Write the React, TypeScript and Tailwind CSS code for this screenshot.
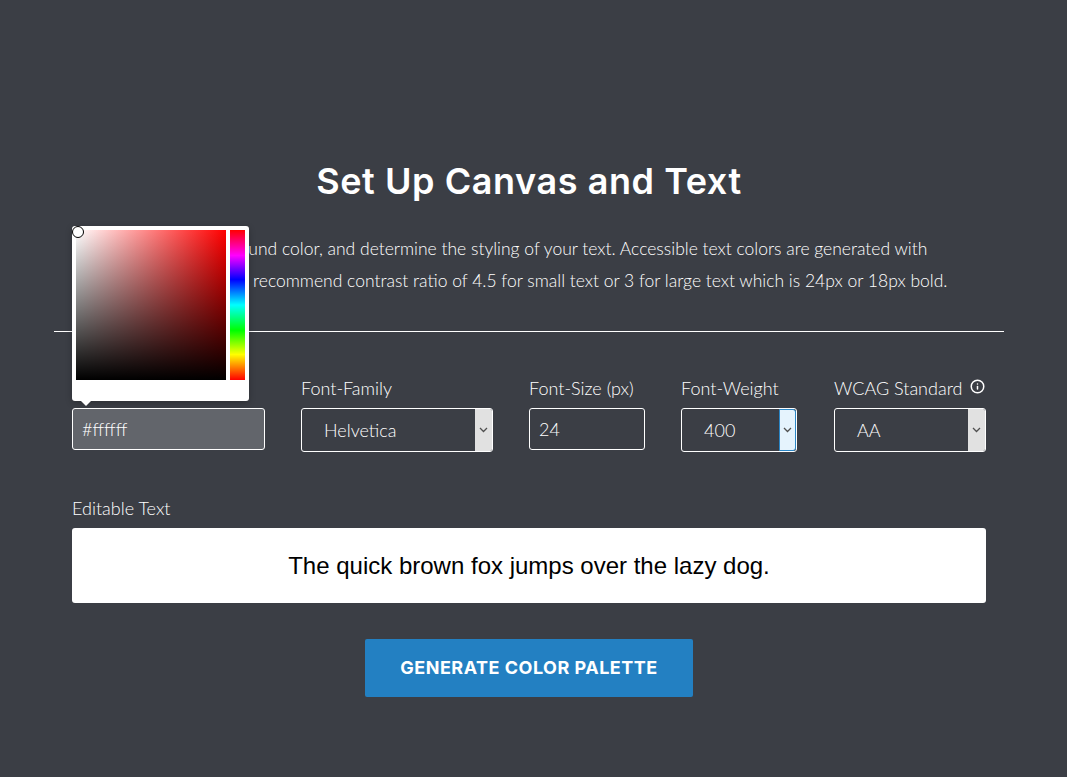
import { Info } from "lucide-react";

const Chevron = () => (
    <svg width="9" height="6" viewBox="0 0 9 6" fill="none">
        <path d="M1 1l3.5 3.5L8 1" stroke="#505050" strokeWidth="1.3" />
    </svg>
);

const SelectBox = ({ value, width, focused }: { value: string; width: string; focused?: boolean }) => (
    <div className={`${width} h-[44px] flex rounded-[3px] border border-white overflow-hidden`}>
        <div className="flex-1 flex items-center pl-[22px] text-[18px] text-white">{value}</div>
        {focused ? (
            <div className="w-[17px] flex items-center justify-center bg-[#e5f3fd] border border-[#2b86c5] rounded-r-[3px]">
                <Chevron />
            </div>
        ) : (
            <div className="w-[17px] flex items-center justify-center bg-[#e1e1e1]">
                <Chevron />
            </div>
        )}
    </div>
);

const ColorPicker = () => (
    <div className="absolute left-0 bottom-[49px] z-10 w-[177px] h-[175px] bg-white rounded-[3px] p-[4px] shadow-[0_2px_6px_rgba(0,0,0,0.25)]">
        <div className="flex gap-[4px]">
            <div className="w-[150px] h-[150px] bg-[linear-gradient(to_top,#000,transparent),linear-gradient(to_right,#fff,#f00)]" />
            <div className="w-[15px] h-[150px] bg-[linear-gradient(to_bottom,#f00,#f0f_17%,#00f_33%,#0ff_50%,#0f0_67%,#ff0_83%,#f00)]" />
        </div>
        <div className="absolute left-0 top-0 w-[12px] h-[12px] rounded-full bg-white border border-black" />
        <div className="absolute left-[9px] -bottom-[5px] w-0 h-0 border-x-[5px] border-x-transparent border-t-[5px] border-t-white" />
    </div>
);

export default function App() {
    return (
        <div className="min-h-[777px] bg-[#3b3e45] font-['Lato',sans-serif] font-light text-white">
            <div className="w-[950px] ml-[54px] pt-[159px]">
                <h1 className="text-center text-[36px] leading-[44px] font-semibold text-white font-['Inter',sans-serif] tracking-[0.57px]">
                    Set Up Canvas and Text
                </h1>
                <div className="mt-[30px] text-center text-[17.5px] leading-[32px]">
                    <p>Set the background color, and determine the styling of your text. Accessible text colors are generated with</p>
                    <p>using the WCAG's recommend contrast ratio of 4.5 for small text or 3 for large text which is 24px or 18px bold.</p>
                </div>
                <hr className="mt-[34px] border-t border-white" />

                <div className="mt-[43px] px-[18px] flex items-start">
                    <div className="relative w-[193px] mr-[36px]">
                        <ColorPicker />
                        <div className="h-[26px] text-[18px] leading-[26px]">Canvas Color</div>
                        <input
                            readOnly
                            value="#ffffff"
                            className="mt-[7px] w-full h-[42px] px-[9px] rounded-[3px] border border-white bg-[#62656b] text-[18px] text-white outline-none"
                        />
                    </div>
                    <div className="w-[192px] mr-[36px]">
                        <div className="h-[26px] text-[18px] leading-[26px]">Font-Family</div>
                        <div className="mt-[7px]"><SelectBox value="Helvetica" width="w-[192px]" /></div>
                    </div>
                    <div className="w-[116px] mr-[36px]">
                        <div className="h-[26px] text-[18px] leading-[26px] whitespace-nowrap">Font-Size (px)</div>
                        <input
                            readOnly
                            value="24"
                            className="mt-[7px] w-full h-[42px] px-[9px] rounded-[3px] border border-white bg-transparent text-[18px] text-white outline-none"
                        />
                    </div>
                    <div className="w-[116px] mr-[37px]">
                        <div className="h-[26px] text-[18px] leading-[26px] whitespace-nowrap">Font-Weight</div>
                        <div className="mt-[7px]"><SelectBox value="400" width="w-[116px]" focused /></div>
                    </div>
                    <div className="w-[152px]">
                        <div className="h-[26px] flex items-center gap-[8px] text-[18px] leading-[26px] whitespace-nowrap">
                            WCAG Standard
                            <Info size={15} strokeWidth={2.4} className="text-white -mt-[3px]" />
                        </div>
                        <div className="mt-[7px]"><SelectBox value="AA" width="w-[152px]" /></div>
                    </div>
                </div>

                <div className="mt-[43px] px-[18px]">
                    <div className="h-[26px] text-[18px] leading-[26px]">Editable Text</div>
                    <div className="mt-[7px] h-[75px] flex items-center justify-center rounded-[3px] bg-white text-black text-[24px] font-normal font-['Liberation_Sans',sans-serif]">
                        The quick brown fox jumps over the lazy dog.
                    </div>
                </div>

                <div className="mt-[36px] flex justify-center">
                    <button type="button" className="w-[328px] h-[58px] pb-[2px] rounded-[2px] bg-[#2380c2] text-white text-[18px] font-bold tracking-[0.5px] font-['Inter',sans-serif]">
                        GENERATE COLOR PALETTE
                    </button>
                </div>
            </div>
        </div>
    );
}
